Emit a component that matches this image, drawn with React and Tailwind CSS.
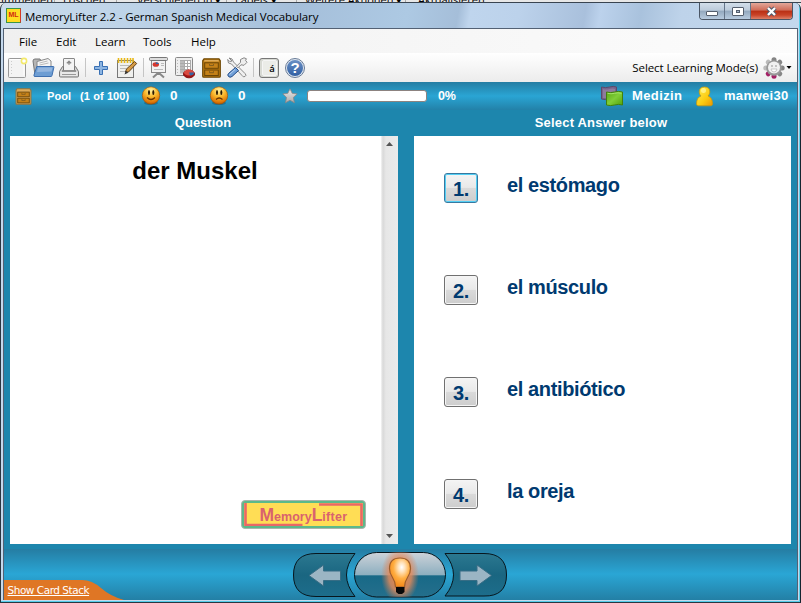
import React from 'react';

const UI = "font-['Open_Sans','Noto_Sans',sans-serif]";
const ARIAL = "font-['Liberation_Sans',Arial,sans-serif]";

function Svg({ w, h, className = '', children }) {
  return (
    <svg width={w} height={h} viewBox={`0 0 ${w} ${h}`} className={`block shrink-0 ${className}`}>
      {children}
    </svg>
  );
}

function NewPage() {
  return (
    <Svg w={20} h={22}>
      <rect x="0.5" y="1.5" width="17" height="19" rx="1" fill="#f3f3f3" stroke="#999" />
      <path d="M3.5 4v14" stroke="#ccc" strokeDasharray="1 2" />
      <path d="M2 2.5h14v16" fill="none" stroke="#fff" />
      <circle cx="16" cy="4" r="2.6" fill="#fff" stroke="#f3e96c" strokeWidth="1.6" />
    </Svg>
  );
}

function OpenFolder() {
  return (
    <Svg w={23} h={22}>
      <path d="M1 4q0-2 2-2h5l1 2h2v14H3z" fill="#b5b5b5" stroke="#777" />
      <path d="M5 10V4.500L16 1.500l3 2.500v7z" fill="#f5f5f5" stroke="#888" />
      <path d="M7.500 6l8-2M7.500 8l9-2" stroke="#bbb" />
      <path d="M4.800 9.500h16.700q.5 0 .4.8L20 18.500q-.2 1-1 1H3q-1.500 0-1-1.500z" fill="#6d9dd3" stroke="#3f70b0" />
      <path d="M6 10.500h14.500l-1 4L5 15z" fill="#9dbde2" opacity=".8" />
    </Svg>
  );
}

function Printer() {
  return (
    <Svg w={20} h={20}>
      <path d="M4.500 10V1q0-.5.5-.5h10q.5 0 .5.500v9" fill="#f4f4f4" stroke="#888" />
      <path d="M10 7V4M7.800 5L10 2.800 12.200 5z" fill="#888" stroke="#888" />
      <path d="M3.500 8.500h1V12h11V8.500h1l3 5v4.500q0 1-1 1h-17q-1 0-1-1v-4.500z" fill="#d5d5d5" stroke="#777" />
      <path d="M5 9.500h10v3H5z" fill="#f4f4f4" />
      <path d="M1.500 14h17v4h-17z" fill="#e9e9e9" />
      <path d="M3 13h14" stroke="#555" strokeWidth="1.200" />
      <path d="M3 16.500h14" stroke="#999" strokeWidth="1.200" />
    </Svg>
  );
}

function Plus() {
  return (
    <Svg w={14} h={14}>
      <path d="M5.500.5h3v5h5v3h-5v5h-3v-5h-5v-3h5z" fill="#8db5e2" stroke="#3970b4" />
    </Svg>
  );
}

function NotePad() {
  return (
    <Svg w={22} h={22}>
      <rect x="1.500" y="3.500" width="16" height="17" fill="#f0f0ee" stroke="#777" />
      <path d="M4 8.500h9M4 11.500h7M4 14.500h5" stroke="#bbb" />
      <path d="M2.500 1v5M5.500 1v5M8.500 1v5M11.500 1v5M14.500 1v5M17 1v5" stroke="#e8b818" strokeWidth="1.600" />
      <path d="M9.500 15l1-3 8-7.500 2.200 2L12.500 15z" fill="#d69b46" stroke="#60411a" />
      <path d="M8.500 17.500l1.200-3.800 2.500 2z" fill="#333" />
    </Svg>
  );
}

function Board() {
  return (
    <Svg w={20} h={22}>
      <path d="M9.500 14v4M9 16l-5 4.500M10 16l5 4.500" stroke="#888" strokeWidth="2" />
      <rect x="2.500" y="2.500" width="14" height="13" fill="#f2f2f2" stroke="#888" />
      <rect x=".5" y=".5" width="18" height="3" rx="1" fill="#ddd" stroke="#777" />
      <ellipse cx="6.800" cy="7.500" rx="3.200" ry="2.300" fill="#d33830" />
      <path d="M6.800 7h3.200q-.5-2-3.200-1.800z" fill="#3465a4" />
      <path d="M12 6.500h3M12 8.500h3M5 12.500h9" stroke="#bbb" />
    </Svg>
  );
}

function Report() {
  return (
    <Svg w={21} h={22}>
      <rect x=".5" y=".5" width="17" height="18" rx="1" fill="#eee" stroke="#888" />
      <rect x="5" y="3" width="11" height="13" fill="#fff" />
      <path d="M5 3.500h4v13H5z" fill="#bbb" />
      <path d="M5 3.500h11M5 6.500h11M5 9.500h11M5 12.500h9M9.500 3v13M12.500 3v10M15.500 3v10" stroke="#aaa" />
      <path d="M2.500 3v14" stroke="#bbb" strokeDasharray="1 2" />
      <ellipse cx="14" cy="17" rx="5.500" ry="3.800" fill="#a31414" stroke="#841010" />
      <ellipse cx="14" cy="15.500" rx="5" ry="3" fill="#d94a40" />
      <path d="M14 15.500h5q0 3-4 3z" fill="#3465a4" />
    </Svg>
  );
}

function Cabinet({ w = 19, h = 20, light = false }) {
  return (
    <svg width={w} height={h} viewBox="0 0 19 20" className="block shrink-0">
      <path d="M2 .8h15l1.300 2v15.500q0 .9-.9.900H1.600q-.9 0-.9-.9V2.800z" fill={light ? '#d8a85c' : '#c17d11'} stroke={light ? '#8f7440' : '#704b09'} strokeWidth="1.200" />
      <path d="M2.500 2h14l.5 1.500H2z" fill="#dfab58" />
      <rect x="2.700" y="4.800" width="13.600" height="5.500" fill="#c58118" stroke="#6a4507" />
      <rect x="2.700" y="12" width="13.600" height="5.500" fill="#c58118" stroke="#6a4507" />
      <path d="M7.500 6v1.500h4V6M7.500 13.200v1.500h4v-1.500" fill="none" stroke="#7c5a20" strokeWidth=".9" />
    </svg>
  );
}

function ToolsIcon() {
  return (
    <Svg w={21} h={21}>
      <path d="M2 1l3 1 1.500 3L18 16.500q2 2 0 3t-3-1L4.500 7 1.500 6 .7 2.500l2 2L5 4z" fill="#f0f0f0" stroke="#888" />
      <path d="M17 .8l2.500 1-1 1.500 1.500 2-3 3-3-.5-3 3-1.500-1.500 4-4V2.500z" fill="#eee" stroke="#888" />
      <path d="M8.500 10.500l3 3-6.500 6q-2 1.500-3.500 0t0-3z" fill="#6f9fd8" stroke="#204a87" />
      <path d="M8 12.500l-5.500 5" stroke="#bcd5f2" />
    </Svg>
  );
}

function KeyA() {
  return (
    <div className="flex h-5 w-5 shrink-0 items-center justify-center rounded-[3px] border border-[#777] bg-[#d8dad4]">
      <div className={`flex h-4 w-[15px] items-center justify-center rounded-[2px] border border-[#f5f5f5] bg-[#ebece8] pl-[6px] pt-[3px] text-[9.500px] font-semibold leading-none text-black ${UI}`}>á</div>
    </div>
  );
}

function Help() {
  return (
    <div className="flex h-5 w-5 shrink-0 items-center justify-center rounded-full border border-[#687b97] bg-[#dfe7f1]">
      <div className={`flex h-4 w-4 items-center justify-center rounded-full bg-gradient-to-b from-[#6a90c4] to-[#315fa3] text-[15px] font-bold leading-none text-white ${ARIAL}`}>?</div>
    </div>
  );
}

function Divider() {
  return <div className="h-[19px] w-px shrink-0 bg-[#c5c5c5]" />;
}

function Gear() {
  const teeth = [0, 45, 90, 135, 180, 225, 270, 315];
  return (
    <Svg w={22} h={22}>
      {teeth.map((a) => (
        <circle key={a} cx="11" cy="2.800" r="2.500" transform={`rotate(${a} 11 11)`} fill={a === 180 || a === 225 ? '#a32065' : a > 225 ? '#bbb' : '#858585'} />
      ))}
      <circle cx="11" cy="11" r="7.800" fill="#999" />
      <circle cx="11" cy="10.500" r="6" fill="#f1f1f1" />
      <path d="M9 8v2M13 8v2" stroke="#aaa" strokeWidth="1.300" />
      <path d="M8 12h6q-.5 3-3 3t-3-3z" fill="#fff" stroke="#bbb" strokeWidth=".8" />
    </Svg>
  );
}

function Smiley({ sad }) {
  const id = sad ? 'faceSad' : 'faceHappy';
  return (
    <Svg w={20} h={20}>
      <defs>
        <radialGradient id={id} cx=".5" cy=".2" r=".85">
          <stop offset="0" stopColor="#fff2a0" />
          <stop offset=".45" stopColor="#f9b72b" />
          <stop offset=".8" stopColor="#df7707" />
          <stop offset="1" stopColor="#a54a00" />
        </radialGradient>
      </defs>
      <ellipse cx="10" cy="17" rx="7" ry="2" fill="#17617e" opacity=".6" />
      <circle cx="10" cy="9.500" r="8.700" fill={`url(#${id})`} stroke="#9a5308" strokeWidth=".6" />
      <ellipse cx="8" cy="6.500" rx="1" ry="2.500" fill="#2a1a04" />
      <ellipse cx="12.300" cy="6.500" rx="1" ry="2.500" fill="#2a1a04" />
      <path d={sad ? 'M7 13.500q3.200-3 6.500 0' : 'M6 11.500q4 4 8 0'} fill="none" stroke="#6a3502" strokeWidth="1.200" />
    </Svg>
  );
}

function Star() {
  return (
    <Svg w={16} h={16}>
      <defs>
        <linearGradient id="star" x2="0" y2="1"><stop stopColor="#ededed" /><stop offset="1" stopColor="#aaa" /></linearGradient>
      </defs>
      <path d="M8 .8l2.200 4.500 5 .6-3.800 3.500 1 5.400L8 12.200l-4.500 2.600 1-5.400L.8 5.900l5-.6z" fill="url(#star)" stroke="#8b8584" strokeWidth=".8" />
    </Svg>
  );
}

function Cards() {
  return (
    <Svg w={24} h={22}>
      <defs>
        <linearGradient id="green" x2="1" y2="1"><stop stopColor="#57a713" /><stop offset=".5" stopColor="#80ce38" /><stop offset="1" stopColor="#51a008" /></linearGradient>
      </defs>
      <path d="M1.500 2q4 1.200 8 0t7 0v12q-4-1.200-7.500 0t-7.500 0z" fill="#79658b" stroke="#5c4969" />
      <path d="M3 4q3 1 6.500 0t5.500 0v9H3z" fill="#8d7c9d" />
      <path d="M6.500 7q4 1.200 8 0t8 0v13q-4-1.200-8 0t-8 0z" fill="url(#green)" stroke="#41800a" />
      <path d="M7.500 8.300q3.500 1 7 0t7 0" fill="none" stroke="#a5e569" />
    </Svg>
  );
}

function Person() {
  return (
    <Svg w={18} h={21}>
      <defs>
        <linearGradient id="person" x2="1" y2="1"><stop stopColor="#fff05a" /><stop offset=".6" stopColor="#fccb10" /><stop offset="1" stopColor="#ed9500" /></linearGradient>
      </defs>
      <path d="M5 10q-1.800-1.500-1.800-4Q3.200 1 8.500 1t5.300 5q0 2.500-1.800 4 4.500 1.500 4.500 8 0 1.800-2 1.800h-12q-2 0-2-1.800Q.5 11.500 5 10z" fill="url(#person)" stroke="#c8990d" strokeWidth=".8" />
      <circle cx="7.500" cy="4.500" r="2.500" fill="#fff9a5" opacity=".7" />
    </Svg>
  );
}

function WindowButtons() {
  return (
    <div className="flex h-[17px] w-[94px] shrink-0 overflow-hidden rounded-b-[4px] border border-t-0 border-[#4b5665]">
      <div className="flex w-[25px] items-center justify-center border-r border-[#65758a] bg-[linear-gradient(#d2deea_0%,#bccbdb_45%,#93a8be_50%,#b8cbdf_100%)]">
        <div className="mt-[4px] h-[5px] w-3 rounded-[1px] border border-[#555f6e] bg-white" />
      </div>
      <div className="flex w-[26px] items-center justify-center border-r border-[#65758a] bg-[linear-gradient(#d2deea_0%,#bccbdb_45%,#93a8be_50%,#b8cbdf_100%)]">
        <div className="flex h-[9px] w-[12px] items-center justify-center rounded-[1px] border border-[#555f6e] bg-white">
          <div className="h-[3px] w-1 border border-[#555f6e] bg-[#a9b8ca]" />
        </div>
      </div>
      <div className="flex flex-1 items-center justify-center bg-[linear-gradient(#e2a799_0%,#cf6b57_45%,#b92f14_50%,#c94327_75%,#dc8068_100%)]">
        <Svg w={13} h={11}>
          <path d="M3 2L10 9M10 2L3 9" stroke="#525a6b" strokeWidth="4.400" />
          <path d="M3 2L10 9M10 2L3 9" stroke="#fff" strokeWidth="2.300" />
        </Svg>
      </div>
    </div>
  );
}

function TitleBar() {
  return (
    <div className="flex h-[25px] shrink-0 items-start bg-[linear-gradient(100deg,#cbdcec_0px,#bdd3e8_130px,#a5bfda_290px,#adc9e3_400px,#a5bed9_450px,#bfd5ed_462px,#bcd2eb_510px,#a9c0dc_575px,#bcd2ec_590px,#a9c2dd_630px,#bed3ea_670px,#c4d8ed_800px)] pl-[3px]">
      <div className={`mt-[5px] flex h-[15px] w-[15px] shrink-0 items-center justify-center border border-[#3b9546] border-r-[#d33b26] bg-[#ffdc20] text-[7px] font-bold text-[#d22810] ${ARIAL}`}>ML</div>
      <div className={`ml-[4px] mt-[6px] w-[674px] shrink-0 whitespace-nowrap text-[11.500px] leading-[16px] tracking-[-0.08px] text-black ${UI}`}>MemoryLifter 2.2 - German Spanish Medical Vocabulary</div>
      <WindowButtons />
    </div>
  );
}

function MenuBar() {
  return (
    <div className={`flex h-6 shrink-0 items-center bg-gradient-to-r from-[#f0f0f0] to-[#fcfcfc] pl-[15px] pt-[1px] text-[11.500px] text-black ${UI}`}>
      <div className="w-[37px]">File</div>
      <div className="w-[39px]">Edit</div>
      <div className="w-12">Learn</div>
      <div className="w-12">Tools</div>
      <div>Help</div>
    </div>
  );
}

function ToolBar() {
  return (
    <div className="flex h-[29px] shrink-0 items-center bg-gradient-to-b from-white to-[#ececec] pl-1">
      <NewPage />
      <div className="ml-[4px]"><OpenFolder /></div>
      <div className="ml-[4px]"><Printer /></div>
      <div className="ml-[6px]"><Divider /></div>
      <div className="ml-[8px]"><Plus /></div>
      <div className="ml-[8px]"><NotePad /></div>
      <div className="ml-[5px]"><Divider /></div>
      <div className="ml-[5px]"><Board /></div>
      <div className="ml-[6px]"><Report /></div>
      <div className="ml-[6px]"><Cabinet /></div>
      <div className="ml-[6px]"><ToolsIcon /></div>
      <div className="ml-[5px]"><Divider /></div>
      <div className="ml-[5px]"><KeyA /></div>
      <div className="ml-[6px]"><Help /></div>
      <div className={`ml-auto whitespace-nowrap text-[11.500px] tracking-[-0.08px] text-black ${UI}`}>Select Learning Mode(s)</div>
      <div className="ml-[5px]"><Gear /></div>
      <Svg w={8} h={5} className="mr-[4px]"><path d="M1.500 1h5L4 4z" fill="#000" /></Svg>
    </div>
  );
}

function StatusBar() {
  return (
    <div className={`flex h-7 shrink-0 items-center whitespace-nowrap bg-[linear-gradient(#247da3_0%,#2aa5d4_50%,#2381a8_100%)] pl-[11px] font-bold text-white ${ARIAL}`}>
      <Cabinet w={17} h={17} light />
      <div className="ml-[15px] w-[33px] text-[11px] tracking-[0.1px]">Pool</div>
      <div className="w-[61px] text-[11px] tracking-[0.1px]">(1 of 100)</div>
      <Smiley />
      <div className="ml-[9px] w-[39px] text-[13.500px]">0</div>
      <Smiley sad />
      <div className="ml-[9px] w-[44px] text-[13.500px]">0</div>
      <Star />
      <div className="ml-[9px] h-3 w-[120px] rounded-[3px] border border-[#8c8380] bg-white" />
      <div className="ml-[11px] text-[12.500px] tracking-[-0.2px]">0%</div>
      <div className="ml-auto"><Cards /></div>
      <div className="ml-[8px] w-[50px] text-[13px] tracking-[0.4px]">Medizin</div>
      <div className="ml-[14px]"><Person /></div>
      <div className="ml-[10px] mr-[8px] w-[65px] text-[13px] tracking-[0.3px]">manwei30</div>
    </div>
  );
}

function ScrollBar() {
  return (
    <div className="flex w-[17px] shrink-0 flex-col items-center justify-between bg-[linear-gradient(90deg,#f4f4f4_0px,#d9d9d9_2px,#e7e7e7_5px,#ebebeb_17px)] pb-[6px] pt-[6px]">
      <Svg w={7} h={4}><path d="M0 4L3.500 0 7 4z" fill="#555" /></Svg>
      <Svg w={7} h={4}><path d="M0 0L3.500 4 7 0z" fill="#555" /></Svg>
    </div>
  );
}

function Logo() {
  return (
    <div className="flex h-[29px] w-[125px] rounded-[4px] border border-[#a9b5ad] bg-[#5cb98a] p-[2px]">
      <div className={`relative flex flex-1 items-center justify-center whitespace-nowrap bg-[#ffdd55] pt-[2px] font-bold text-[#d9626e] ${ARIAL}`}>
        <svg viewBox="0 0 119 23" className="absolute inset-0 h-full w-full">
          <path d="M1.500 0v22h57M75 1.500h42.500V23" fill="none" stroke="#e96767" strokeWidth="2.600" />
        </svg>
        <div className="relative flex items-baseline leading-none">
          <span className="text-[17.500px]">M</span><span className="text-[12.500px]">emory</span>
          <span className="text-[17.500px]">L</span><span className="text-[12.500px] tracking-[0.3px]">ifter</span>
        </div>
      </div>
    </div>
  );
}

function QuestionPanel() {
  return (
    <div className="flex h-[408px] w-[388px] shrink-0 bg-white">
      <div className="flex flex-1 flex-col items-center justify-between pb-[15px] pt-[20px]">
        <div className={`whitespace-nowrap pr-[1px] text-[24px] font-bold leading-[30px] text-black ${ARIAL}`}>der Muskel</div>
        <div className="mr-[15px] self-end"><Logo /></div>
      </div>
      <ScrollBar />
    </div>
  );
}

const answers = ['el estómago', 'el músculo', 'el antibiótico', 'la oreja'];

function AnswerPanel() {
  return (
    <div className={`flex h-[408px] w-[377px] shrink-0 flex-col bg-white pt-9 text-[20px] font-bold text-[#003a70] ${ARIAL}`}>
      {answers.map((answer, i) => (
        <div key={answer} className="flex h-[102px] shrink-0 items-start pl-[30px]">
          <div className={`mt-[1px] flex h-[30px] w-[34px] shrink-0 items-center justify-center rounded-[3px] border bg-[linear-gradient(#f4f4f4_0%,#e9e9e9_48%,#dadada_50%,#cdcdcd_100%)] pt-[1px] tracking-[-0.3px] ${i === 0 ? 'border-[#3779a0] shadow-[inset_0_0_0_1px_#53cff5]' : 'border-[#707070] shadow-[inset_0_0_0_1px_#f5f5f5]'}`}>
            {i + 1}.
          </div>
          <div className="ml-[29px] whitespace-nowrap leading-[26px] tracking-[-0.38px]">{answer}</div>
        </div>
      ))}
    </div>
  );
}

function Navigation() {
  return (
    <Svg w={214} h={50} className="overflow-visible">
      <defs>
        <linearGradient id="navDark" x2="0" y2="1"><stop stopColor="#2b7890" /><stop offset=".5" stopColor="#1a6681" /><stop offset="1" stopColor="#1d6d8b" /></linearGradient>
        <linearGradient id="navMain" x2="0" y2="1">
          <stop stopColor="#cdd3d9" /><stop offset=".51" stopColor="#8caebf" /><stop offset=".52" stopColor="#186987" /><stop offset="1" stopColor="#246f8c" />
        </linearGradient>
        <radialGradient id="halo"><stop stopColor="#ff8b38" /><stop offset=".6" stopColor="#e98b59" stopOpacity=".8" /><stop offset="1" stopColor="#d77d52" stopOpacity="0" /></radialGradient>
        <radialGradient id="bulb" cx=".58" cy=".32" r=".65"><stop stopColor="#fff" /><stop offset=".25" stopColor="#ffe2bb" /><stop offset=".6" stopColor="#ffae42" /><stop offset="1" stopColor="#f58b1c" /></radialGradient>
        <clipPath id="pill"><rect x="62" y="1" width="91" height="45" rx="22" /></clipPath>
      </defs>
      <path d="M62 2.500H23Q.5 2.500.5 24T23 45.500h39q-17-21.500 0-43z" fill="url(#navDark)" stroke="#07161d" />
      <path d="M152 2.500h39q22.500 0 22.500 21.500T191 45h-39q17-21 0-42.500z" fill="url(#navDark)" stroke="#07161d" />
      <rect x="61.500" y="1.500" width="91" height="44.500" rx="22.200" fill="url(#navMain)" stroke="#07161d" />
      <ellipse cx="107" cy="24" rx="19" ry="28" fill="url(#halo)" clipPath="url(#pill)" />
      <path d="M102.500 36q0-5-3-9.500-3-4-3-9 0-10.500 10.500-10.500t10.500 10.500q0 5-3 9-3 4.500-3 9.500z" fill="url(#bulb)" stroke="#9b5c2c" strokeWidth="1.200" />
      <path d="M103 36h8.500v5l-2.500 2h-3.500L103 41z" fill="#080808" />
      <path d="M16 24.500L30.500 14v6H47.500v9.500H30.500v5.500z" fill="#9bb5c4" stroke="#376d85" />
      <path d="M198.500 24.500L184 14v6h-17v9.500h17v5.500z" fill="#9bb5c4" stroke="#376d85" />
    </Svg>
  );
}

function Footer() {
  return (
    <div className="relative flex h-[51px] shrink-0 items-start justify-center bg-[linear-gradient(#257da3_0%,#2aa6d5_49%,#237fa5_100%)]">
      <div className="mt-[2px] pr-[1px]"><Navigation /></div>
      <div className="absolute bottom-0 left-0 h-[20px] w-[122px]">
        <svg width="122" height="20" className="absolute inset-0">
          <path d="M0 0h78q10 0 19 8t23 12H0z" fill="#df7625" />
        </svg>
        <div className="relative ml-[3.500px] mt-[2px] whitespace-nowrap font-['DejaVu_Sans',sans-serif] text-[10.500px] leading-[16px] tracking-[-0.47px] text-white underline">Show Card Stack</div>
      </div>
    </div>
  );
}

function BackgroundSliver() {
  return (
    <div className={`flex h-[3px] shrink-0 items-end overflow-hidden border-b border-[#394450] bg-[#e7e7e7] text-[11px] leading-[5px] text-black ${UI}`}>
      <div className="w-[54px] pl-[1px]">Immelden</div>
      <div className="w-[62px] border-l border-[#aaa] pl-2">Löschen</div>
      <div className="w-[110px] border-l border-[#aaa] pl-5">Verschieben in ▾</div>
      <div className="w-[70px] border-l border-[#aaa] pl-2">Labels ▾</div>
      <div className="w-[109px] border-l border-[#aaa] pl-2">Weitere Aktionen ▾</div>
      <div className="border-l border-[#aaa] pl-3">Aktualisieren</div>
    </div>
  );
}

export default function App() {
  return (
    <div className="flex h-[603px] w-[801px] flex-col overflow-hidden bg-[#e7e7e7]">
      <BackgroundSliver />
      <div className="flex h-[600px] w-[801px] flex-col overflow-hidden rounded-t-[6px] border-b-[1px] border-l border-r border-[#293640] border-r-[#142530] bg-[#c5d9ed] pl-[2px] pr-[1px] shadow-[inset_-1px_0_0_#58cee8,inset_0_-1px_0_#54cce9,inset_0_1px_0_#f0f8ff]">
        <TitleBar />
        <div className="mr-[1px] flex h-[572px] shrink-0 flex-col border-l border-r border-t border-[#536174] bg-[#1d86ad]">
          <MenuBar />
          <ToolBar />
          <StatusBar />
          <div className={`flex h-[26px] shrink-0 pt-[4px] text-[13px] font-bold leading-[18px] text-white ${ARIAL}`}>
            <div className="w-[398px] text-center">Question</div>
            <div className="flex-1 pl-[3px] text-center tracking-[0.2px]">Select Answer below</div>
          </div>
          <div className="flex shrink-0 gap-4 pl-[6px]">
            <QuestionPanel />
            <AnswerPanel />
          </div>
          <div className="h-[5px] shrink-0" />
          <Footer />
        </div>
      </div>
    </div>
  );
}
